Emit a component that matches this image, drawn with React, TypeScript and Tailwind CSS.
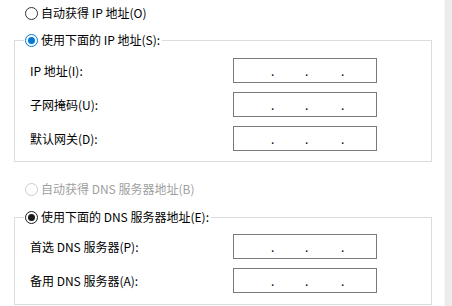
import React from "react";

type RadioState = "off" | "blue" | "dark" | "disabled";

const Radio: React.FC<{ state: RadioState }> = ({ state }) => {
  const ring =
    state === "blue"
      ? "border-[#0078d7]"
      : state === "dark"
        ? "border-[#1a1a1a]"
        : state === "disabled"
          ? "border-[#cccccc]"
          : "border-[#333333]";
  return (
    <span
      className={`flex h-[13px] w-[13px] shrink-0 items-center justify-center rounded-full border bg-white ${ring}`}
    >
      {state === "blue" && <span className="h-[7px] w-[7px] rounded-full bg-[#0078d7]" />}
      {state === "dark" && <span className="h-[7px] w-[7px] rounded-full bg-[#1a1a1a]" />}
    </span>
  );
};

const RadioLabel: React.FC<{ state: RadioState; text: string }> = ({ state, text }) => (
  <span className="flex items-center gap-[3px]">
    <Radio state={state} />
    <span className={state === "disabled" ? "text-[#a0a0a0]" : "text-black"}>{text}</span>
  </span>
);

const IpBox: React.FC = () => (
  <div className="flex h-[25px] w-[144px] items-center border border-[#7a7a7a] bg-white pl-[37px] text-[12px] leading-none text-black">
    <span className="w-[3px] text-center">.</span>
    <span className="w-[31px]" />
    <span className="w-[3px] text-center">.</span>
    <span className="w-[33px]" />
    <span className="w-[3px] text-center">.</span>
  </div>
);

const FieldRow: React.FC<{ label: string }> = ({ label }) => (
  <div className="flex h-[25px] items-center">
    <div className="w-[218px] pl-[15px]">{label}</div>
    <IpBox />
  </div>
);

const Group: React.FC<{
  legend: string;
  state: RadioState;
  rows: string[];
  className: string;
}> = ({ legend, state, rows, className }) => (
  <fieldset className={`border border-[#dcdcdc] ${className}`}>
    <legend className="ml-[9px] flex h-[20px] items-center pl-[1px] pr-[2px]">
      <RadioLabel state={state} text={legend} />
    </legend>
    <div className="flex flex-col gap-[9px]">
      {rows.map((r) => (
        <FieldRow key={r} label={r} />
      ))}
    </div>
  </fieldset>
);

export default function App() {
  return (
    <div className="flex h-[306px] w-[452px] overflow-hidden bg-white font-['Noto_Sans_CJK_SC','Noto_Sans',sans-serif] text-[12px] text-black">
      <div className="w-[444px] pl-[14px] pr-[12px]">
        <div className="flex h-[26px] items-center pl-[11px]">
          <RadioLabel state="off" text="自动获得 IP 地址(O)" />
        </div>

        <Group
          legend="使用下面的 IP 地址(S):"
          state="blue"
          rows={["IP 地址(I):", "子网掩码(U):", "默认网关(D):"]}
          className="mt-[4px] pb-[10px] pt-[8px]"
        />

        <div className="mt-[14px] flex h-[26px] items-center pl-[11px]">
          <RadioLabel state="disabled" text="自动获得 DNS 服务器地址(B)" />
        </div>

        <Group
          legend="使用下面的 DNS 服务器地址(E):"
          state="dark"
          rows={["首选 DNS 服务器(P):", "备用 DNS 服务器(A):"]}
          className="mt-[5px] pb-[11px] pt-[7px]"
        />
      </div>
      <div className="w-[8px] border-l border-[#f7f7f7] bg-[#ececec]" />
    </div>
  );
}
